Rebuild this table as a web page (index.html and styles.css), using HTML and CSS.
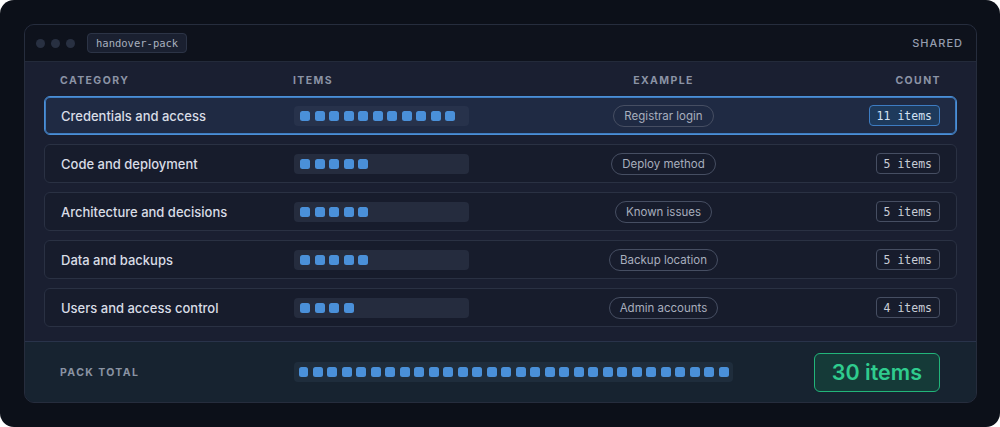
FILE: index.html
```html
<!DOCTYPE html>
<html lang="en">
<head>
    <meta charset="UTF-8">
    <meta name="viewport" content="width=device-width, initial-scale=1.0">
    <title>Handover pack</title>
    <link rel="stylesheet" href="styles.css">
</head>
<body>
    <div class="frame">
        <div class="card">
            <div class="titlebar">
                <span class="dot"></span><span class="dot"></span><span class="dot"></span>
                <span class="tag">handover-pack</span>
                <span class="shared">SHARED</span>
            </div>

            <div class="table">
                <div class="head">
                    <span>CATEGORY</span>
                    <span>ITEMS</span>
                    <span class="c-example">EXAMPLE</span>
                    <span class="c-count">COUNT</span>
                </div>

                <div class="row active">
                    <span class="label">Credentials and access</span>
                    <div class="track"><i></i><i></i><i></i><i></i><i></i><i></i><i></i><i></i><i></i><i></i><i></i></div>
                    <div class="c-example"><span class="pill">Registrar login</span></div>
                    <div class="c-count"><span class="count">11 items</span></div>
                </div>
                <div class="row">
                    <span class="label">Code and deployment</span>
                    <div class="track"><i></i><i></i><i></i><i></i><i></i></div>
                    <div class="c-example"><span class="pill">Deploy method</span></div>
                    <div class="c-count"><span class="count">5 items</span></div>
                </div>
                <div class="row">
                    <span class="label">Architecture and decisions</span>
                    <div class="track"><i></i><i></i><i></i><i></i><i></i></div>
                    <div class="c-example"><span class="pill">Known issues</span></div>
                    <div class="c-count"><span class="count">5 items</span></div>
                </div>
                <div class="row">
                    <span class="label">Data and backups</span>
                    <div class="track"><i></i><i></i><i></i><i></i><i></i></div>
                    <div class="c-example"><span class="pill">Backup location</span></div>
                    <div class="c-count"><span class="count">5 items</span></div>
                </div>
                <div class="row">
                    <span class="label">Users and access control</span>
                    <div class="track"><i></i><i></i><i></i><i></i></div>
                    <div class="c-example"><span class="pill">Admin accounts</span></div>
                    <div class="c-count"><span class="count">4 items</span></div>
                </div>
            </div>

            <div class="total">
                <span class="total-label">PACK TOTAL</span>
                <div class="track long"><i></i><i></i><i></i><i></i><i></i><i></i><i></i><i></i><i></i><i></i><i></i><i></i><i></i><i></i><i></i><i></i><i></i><i></i><i></i><i></i><i></i><i></i><i></i><i></i><i></i><i></i><i></i><i></i><i></i><i></i></div>
                <div class="c-count"><span class="big">30 items</span></div>
            </div>
        </div>
    </div>
</body>
</html>
```

FILE: styles.css
```css
* {
    margin: 0;
    padding: 0;
    box-sizing: border-box;
}
body {
    background: #ffffff;
    font-family: Inter, 'Noto Sans', sans-serif;
}
.frame {
    width: 1000px;
    height: 427px;
    padding: 24px 23px 24px 24px;
    background: #0c1019;
    border-radius: 14px;
}
.card {
    height: 379px;
    border: 1px solid #262d3d;
    border-radius: 10px;
    overflow: hidden;
    background: #1a1f31;
    display: flex;
    flex-direction: column;
}

/* title bar */
.titlebar {
    flex-shrink: 0;
    height: 37px;
    background: #0e121c;
    border-bottom: 1px solid #232a3a;
    display: flex;
    align-items: center;
    padding: 0 13px 0 11px;
}
.dot {
    width: 9px;
    height: 9px;
    border-radius: 50%;
    background: #283041;
    margin-right: 6px;
}
.tag {
    margin-left: 6px;
    height: 20px;
    padding: 0 8px;
    display: flex;
    align-items: center;
    font-family: 'DejaVu Sans Mono', monospace;
    font-size: 10.5px;
    color: #a9b0bf;
    background: #1a2030;
    border: 1px solid #2c3446;
    border-radius: 4px;
}
.shared {
    margin-left: auto;
    font-size: 11px;
    font-weight: 500;
    letter-spacing: 1px;
    color: #959daf;
}

/* table */
.table {
    flex-shrink: 0;
    height: 279px;
    padding: 8px 19px 0;
}
.head, .row {
    display: grid;
    grid-template-columns: 233px 175px 1fr 82px;
    align-items: center;
    padding: 0 16px;
}
.head {
    height: 20px;
    margin-bottom: 6px;
    font-size: 10.5px;
    font-weight: 700;
    letter-spacing: 1.4px;
    color: #8b93a5;
}
.c-example {
    display: flex;
    justify-content: center;
}
.c-count {
    display: flex;
    justify-content: flex-end;
}
.row {
    height: 39px;
    margin-bottom: 9px;
    background: #171c2c;
    border: 1px solid #2a3143;
    border-radius: 6px;
}
.row:last-child {
    margin-bottom: 0;
}
.row.active {
    background: #1f2a43;
    border-color: #4b8fd6;
    box-shadow: inset 0 0 0 1px #3f7cc0;
}
.label {
    font-size: 13px;
    font-weight: 500;
    color: #d9dde6;
}
.track {
    height: 20px;
    width: 175px;
    padding: 0 6px;
    display: flex;
    align-items: center;
    gap: 4.5px;
    background: #252c3e;
    border-radius: 4px;
}
.row.active .track {
    background: #27324b;
}
.track i {
    width: 10px;
    height: 10px;
    border-radius: 2.5px;
    background: #4a90d9;
}
.track.long {
    width: 439px;
    padding: 0 4.5px;
    background: #1f2d3c;
}
.pill {
    height: 22px;
    padding: 0 10px;
    display: flex;
    align-items: center;
    font-size: 11.5px;
    color: #a7aebd;
    border: 1px solid #464e62;
    border-radius: 11px;
}
.count {
    height: 21px;
    padding: 0 7px;
    display: flex;
    align-items: center;
    font-family: 'DejaVu Sans Mono', monospace;
    font-size: 11.5px;
    color: #c9cdd6;
    border: 1px solid #464e62;
    border-radius: 4px;
}
.row.active .count {
    background: #1e3a5c;
    border-color: #3d7cc2;
    color: #d4e2f4;
}

/* footer */
.total {
    flex-shrink: 0;
    height: 61px;
    background: #172330;
    border-top: 1px solid #29334a;
    display: grid;
    grid-template-columns: 234px 439px 1fr;
    align-items: center;
    padding: 0 36px 0 35px;
}
.total-label {
    font-size: 10.5px;
    font-weight: 700;
    letter-spacing: 1.4px;
    color: #8a93a3;
}
.big {
    height: 39px;
    padding: 0 17px;
    display: flex;
    align-items: center;
    font-size: 21.5px;
    font-weight: 600;
    color: #2fcc8e;
    background: #153a38;
    border: 1.5px solid #22b57a;
    border-radius: 6px;
}
```
